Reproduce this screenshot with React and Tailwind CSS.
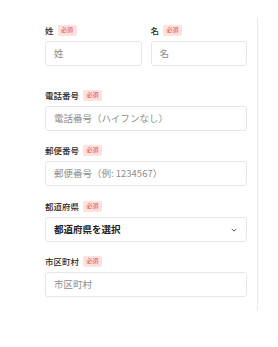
import React from "react";

const font = { fontFamily: '"Noto Sans CJK JP", "Noto Sans", sans-serif' };

function Label({ text }) {
  return (
    <div className="flex items-center h-[12px] mb-[5px] gap-[4px]">
      <span className="text-[8.5px] leading-none font-medium text-[#2a2a2a]">{text}</span>
      <span className="text-[6px] leading-none px-[3.5px] py-[2.5px] rounded-[2px] bg-[#fde0e0] text-[#e0483d]">必須</span>
    </div>
  );
}

function Input({ ph }) {
  return (
    <div className="h-[25px] border border-[#e6e6e6] rounded-[3px] flex items-center px-[8px] text-[9.5px] text-[#8e8e8e] bg-white">
      {ph}
    </div>
  );
}

export default function App() {
  return (
    <div className="w-[278px] h-[347px] bg-white" style={font}>
      <div className="ml-[45px] mt-[17px] w-[213px] h-[293px] pr-[10px] pt-[7px] border-r border-[#e8e8e8]">
        <div className="flex gap-[9px]">
          <div className="flex-1">
            <Label text="姓" />
            <Input ph="姓" />
          </div>
          <div className="flex-1">
            <Label text="名" />
            <Input ph="名" />
          </div>
        </div>
        <div className="mt-[23px]">
          <Label text="電話番号" />
          <Input ph="電話番号（ハイフンなし）" />
        </div>
        <div className="mt-[13px]">
          <Label text="郵便番号" />
          <Input ph="郵便番号（例: 1234567）" />
        </div>
        <div className="mt-[14px]">
          <Label text="都道府県" />
          <div className="h-[25px] border border-[#e6e6e6] rounded-[3px] flex items-center justify-between px-[8px] bg-white">
            <span className="text-[9.5px] font-bold text-[#222]">都道府県を選択</span>
            <svg width="6" height="4" viewBox="0 0 8 5" fill="none" className="mr-[1px]">
              <path d="M1 1l3 3 3-3" stroke="#444" strokeWidth="1.2" />
            </svg>
          </div>
        </div>
        <div className="mt-[13px]">
          <Label text="市区町村" />
          <Input ph="市区町村" />
        </div>
      </div>
    </div>
  );
}
